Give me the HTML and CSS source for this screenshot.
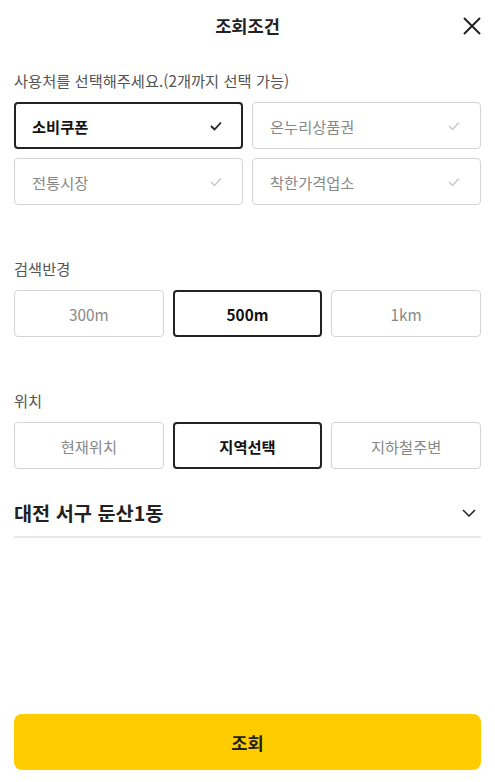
FILE: index.html
```html
<!DOCTYPE html>
<html lang="ko">

<head>
    <meta charset="UTF-8">
    <meta name="viewport" content="width=device-width, initial-scale=1.0">
    <title>조회조건</title>
    <link rel="stylesheet" href="styles.css">
</head>

<body>
    <div class="sheet">
        <header class="sheet-header">
            <h1 class="sheet-title">조회조건</h1>
            <button class="close-btn" aria-label="닫기">
                <svg width="20" height="20" viewBox="0 0 20 20">
                    <path d="M2 2 L18 18 M18 2 L2 18" stroke="#222" stroke-width="2" fill="none" />
                </svg>
            </button>
        </header>

        <!-- 사용처 -->
        <section class="section">
            <p class="section-label">사용처를 선택해주세요.(2개까지 선택 가능)</p>
            <div class="option-grid">
                <button class="option option-check selected">
                    <span>소비쿠폰</span>
                    <svg class="check" width="12" height="10" viewBox="0 0 12 10">
                        <path d="M1 5 L4.5 8.5 L11 1.5" fill="none" stroke-width="1.8" />
                    </svg>
                </button>
                <button class="option option-check">
                    <span>온누리상품권</span>
                    <svg class="check" width="12" height="10" viewBox="0 0 12 10">
                        <path d="M1 5 L4.5 8.5 L11 1.5" fill="none" stroke-width="1.5" />
                    </svg>
                </button>
                <button class="option option-check">
                    <span>전통시장</span>
                    <svg class="check" width="12" height="10" viewBox="0 0 12 10">
                        <path d="M1 5 L4.5 8.5 L11 1.5" fill="none" stroke-width="1.5" />
                    </svg>
                </button>
                <button class="option option-check">
                    <span>착한가격업소</span>
                    <svg class="check" width="12" height="10" viewBox="0 0 12 10">
                        <path d="M1 5 L4.5 8.5 L11 1.5" fill="none" stroke-width="1.5" />
                    </svg>
                </button>
            </div>
        </section>

        <!-- 검색반경 -->
        <section class="section section-gap">
            <p class="section-label">검색반경</p>
            <div class="option-row">
                <button class="option">300m</button>
                <button class="option selected">500m</button>
                <button class="option">1km</button>
            </div>
        </section>

        <!-- 위치 -->
        <section class="section section-gap">
            <p class="section-label">위치</p>
            <div class="option-row">
                <button class="option">현재위치</button>
                <button class="option selected">지역선택</button>
                <button class="option">지하철주변</button>
            </div>
            <div class="region-select">
                <span>대전 서구 둔산1동</span>
                <svg width="14" height="8" viewBox="0 0 14 8">
                    <path d="M1 1 L7 7 L13 1" fill="none" stroke="#222" stroke-width="1.5" />
                </svg>
            </div>
        </section>

        <div class="sheet-footer">
            <button class="search-btn">조회</button>
        </div>
    </div>
</body>

</html>
```

FILE: styles.css
```css
*,
*::before,
*::after {
    box-sizing: border-box;
    margin: 0;
    padding: 0;
}

body {
    font-family: "Noto Sans CJK KR", "Noto Sans", sans-serif;
    color: #222;
    background: #fff;
}

button {
    font-family: inherit;
    background: none;
    border: none;
    cursor: pointer;
}

.sheet {
    min-height: 100vh;
    display: flex;
    flex-direction: column;
    padding: 0 14px;
}

.sheet-header {
    height: 52px;
    display: flex;
    align-items: center;
    justify-content: center;
    position: relative;
}

.sheet-title {
    font-size: 17.6px;
    font-weight: 700;
    line-height: 20px;
    color: #222;
}

.close-btn {
    position: absolute;
    right: -1px;
    top: 16px;
    width: 20px;
    height: 20px;
    display: flex;
}

.section {
    margin-top: 18px;
}

.section-gap {
    margin-top: 53px;
}

.section-label {
    font-size: 15.3px;
    line-height: 20px;
    color: #555;
    margin-bottom: 12px;
}

.option-grid {
    display: grid;
    grid-template-columns: 1fr 1fr;
    gap: 9px;
}

.option-row {
    display: grid;
    grid-template-columns: repeat(3, 1fr);
    gap: 9px;
}

.option {
    height: 47px;
    border: 1px solid #d2d4d7;
    border-radius: 4px;
    font-size: 15.3px;
    color: #888;
    display: flex;
    align-items: center;
    justify-content: center;
}

.option.selected {
    border: 2px solid #222;
    color: #111;
    font-weight: 700;
}

.option-check {
    justify-content: space-between;
    padding: 0 20px 0 17px;
}

.option-check.selected {
    padding: 0 19px 0 16px;
}

.check path {
    stroke: #c8c8c8;
}

.option.selected .check path {
    stroke: #222;
}

.region-select {
    margin-top: 20px;
    height: 49px;
    border-bottom: 2px solid #e8e8e8;
    display: flex;
    align-items: center;
    justify-content: space-between;
    padding: 0 5px 0 0;
    font-size: 19.7px;
    font-weight: 700;
    color: #222;
}

.sheet-footer {
    margin-top: auto;
    padding-bottom: 12px;
}

.search-btn {
    width: 100%;
    height: 56px;
    border-radius: 8px;
    background: #ffcc00;
    font-size: 17.6px;
    font-weight: 700;
    color: #222;
}
```
